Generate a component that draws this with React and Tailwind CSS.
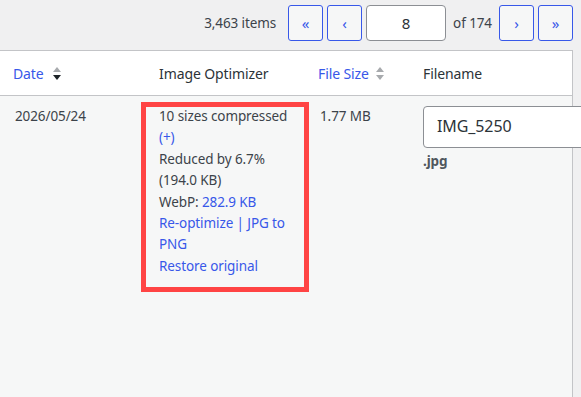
import React from "react";

function SortIcon({ upDark = false, downDark = false }) {
  return (
    <svg width="10" height="17" viewBox="0 0 10 17" className="shrink-0">
      <polygon points="1,7 5,2 9,7" fill={upDark ? "#1d2327" : "#a7aaad"} />
      <polygon points="1,10 9,10 5,15" fill={downDark ? "#1d2327" : "#a7aaad"} />
    </svg>
  );
}

function PageBtn({ children }) {
  return (
    <div className="w-[35px] h-[36px] flex items-center justify-center border border-[#3858e9] rounded-[3px] bg-[#f6f7f7] text-[#3858e9] text-[15px] leading-none">
      {children}
    </div>
  );
}

export default function App() {
  return (
    <div className="w-[581px] h-[397px] overflow-hidden bg-[#f0f0f1] font-['Noto_Sans',sans-serif] text-[#3c434a] text-[13.5px] tracking-[-0.1px] flex flex-col">
      {/* top pagination */}
      <div className="h-[50px] shrink-0 flex items-start justify-end pr-[8px] pt-[5px]">
        <div className="flex items-center h-[36px] gap-[4px]">
          <span className="mr-[8px] text-[#3c434a]">3,463 items</span>
          <PageBtn>«</PageBtn>
          <PageBtn>‹</PageBtn>
          <div className="w-[80px] h-[36px] border border-[#8c8f94] rounded-[4px] bg-white flex items-center justify-center text-[15px] text-[#2c3338]">
            8
          </div>
          <span className="mx-[3px]">of 174</span>
          <PageBtn>›</PageBtn>
          <PageBtn>»</PageBtn>
        </div>
      </div>

      {/* table */}
      <div className="w-[573px] flex-1 flex flex-col border-t border-r border-[#c3c4c7]">
        <div className="grid grid-cols-[146px_159px_105px_162px] h-[45px] shrink-0 bg-white border-b border-[#c3c4c7] items-center text-[14px]">
          <div className="pl-[13px] flex items-center gap-[8px] text-[#3858e9]">
            <span>Date</span>
            <SortIcon downDark />
          </div>
          <div className="pl-[13px] text-[#2c3338]">Image Optimizer</div>
          <div className="pl-[13px] flex items-center gap-[6px] text-[#3858e9]">
            <span>File Size</span>
            <SortIcon />
          </div>
          <div className="pl-[13px] text-[#2c3338]">Filename</div>
        </div>

        <div className="flex-1 bg-[#f6f7f7] grid grid-cols-[146px_159px_105px_162px] items-start leading-[21.4px]">
          <div className="pl-[15px] pt-[10px]">2026/05/24</div>
          <div className="pt-[6px]">
            <div className="ml-[-5px] w-[168px] border-[5px] border-[#ff4444] pl-[13px] pb-[10px]">
              <div className="mt-[-1px]">
                <div>10 sizes compressed</div>
                <div className="text-[#3858e9]">(+)</div>
                <div>Reduced by 6.7%</div>
                <div>(194.0 KB)</div>
                <div>
                  WebP: <span className="text-[#3858e9]">282.9 KB</span>
                </div>
                <div className="text-[#3858e9]">Re-optimize | JPG to</div>
                <div className="text-[#3858e9]">PNG</div>
                <div className="text-[#3858e9]">Restore original</div>
              </div>
            </div>
          </div>
          <div className="pl-[15px] pt-[10px]">1.77 MB</div>
          <div className="pl-[13px] pt-[10px]">
            <div className="w-[170px] h-[42px] border border-[#8c8f94] rounded-[4px] bg-white flex items-center pl-[13px] text-[16px] text-[#2c3338]">
              IMG_5250
            </div>
            <div className="mt-[3px] font-bold text-[#50575e]">.jpg</div>
          </div>
        </div>
      </div>
    </div>
  );
}
